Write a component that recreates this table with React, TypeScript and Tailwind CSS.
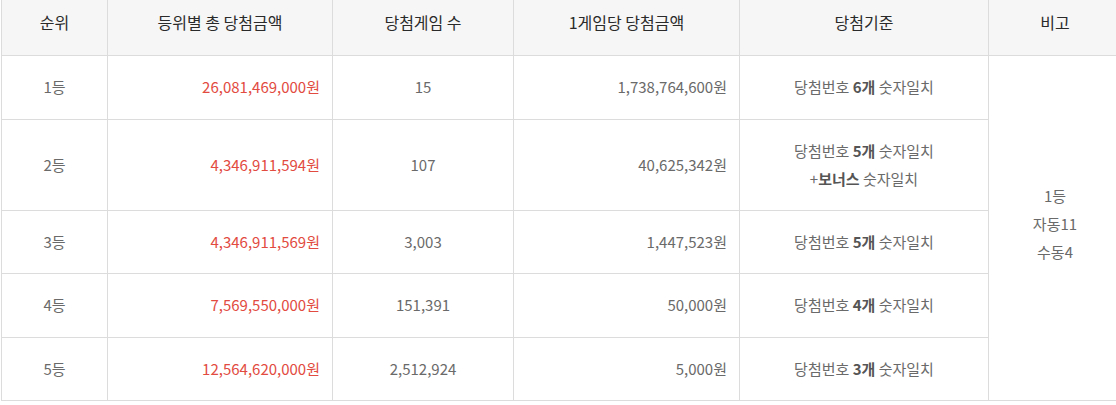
import React from "react";

type Row = {
  rank: string;
  total: string;
  count: string;
  per: string;
  crit: React.ReactNode;
  h: string;
};

const B = ({ children }: { children: React.ReactNode }) => (
  <b className="font-bold text-[#555]">{children}</b>
);

const rows: Row[] = [
  {
    rank: "1등",
    total: "26,081,469,000원",
    count: "15",
    per: "1,738,764,600원",
    crit: (
      <>
        당첨번호 <B>6개</B> 숫자일치
      </>
    ),
    h: "h-[64px]",
  },
  {
    rank: "2등",
    total: "4,346,911,594원",
    count: "107",
    per: "40,625,342원",
    crit: (
      <>
        당첨번호 <B>5개</B> 숫자일치
        <br />+<B>보너스</B> 숫자일치
      </>
    ),
    h: "h-[91px]",
  },
  {
    rank: "3등",
    total: "4,346,911,569원",
    count: "3,003",
    per: "1,447,523원",
    crit: (
      <>
        당첨번호 <B>5개</B> 숫자일치
      </>
    ),
    h: "h-[63px]",
  },
  {
    rank: "4등",
    total: "7,569,550,000원",
    count: "151,391",
    per: "50,000원",
    crit: (
      <>
        당첨번호 <B>4개</B> 숫자일치
      </>
    ),
    h: "h-[64px]",
  },
  {
    rank: "5등",
    total: "12,564,620,000원",
    count: "2,512,924",
    per: "5,000원",
    crit: (
      <>
        당첨번호 <B>3개</B> 숫자일치
      </>
    ),
    h: "h-[63px]",
  },
];

export default function App() {
  const th =
    "border border-[#dcdcdc] border-t-0 bg-[#f6f6f6] text-[16px] leading-[22px] font-normal text-[#2a2a2a] text-center align-middle pt-[11px] pb-[21px]";
  const td =
    "border border-[#dcdcdc] text-[15px] leading-[28px] text-[#6a6a6a] align-middle";
  return (
    <div
      className="w-[1116px] h-[405px] overflow-hidden bg-white"
      style={{ fontFamily: '"Noto Sans CJK KR", "Noto Sans", sans-serif' }}
    >
      <table className="ml-px w-[1120px] table-fixed border-collapse">
        <colgroup>
          <col className="w-[106px]" />
          <col className="w-[225px]" />
          <col className="w-[181px]" />
          <col className="w-[226px]" />
          <col className="w-[249px]" />
          <col className="w-[133px]" />
        </colgroup>
        <thead>
          <tr className="h-[55px]">
            <th className={th}>순위</th>
            <th className={th}>등위별 총 당첨금액</th>
            <th className={th}>당첨게임 수</th>
            <th className={th}>1게임당 당첨금액</th>
            <th className={th}>당첨기준</th>
            <th className={th}>비고</th>
          </tr>
        </thead>
        <tbody>
          {rows.map((r, i) => (
            <tr key={r.rank} className={r.h}>
              <td className={`${td} text-center`}>{r.rank}</td>
              <td className={`${td} text-right pr-[12px] text-[#e24b3f]`}>
                {r.total}
              </td>
              <td className={`${td} text-center`}>{r.count}</td>
              <td className={`${td} text-right pr-[12px]`}>{r.per}</td>
              <td className={`${td} text-center`}>{r.crit}</td>
              {i === 0 && (
                <td rowSpan={5} className={`${td} text-center pb-[8px]`}>
                  1등
                  <br />
                  자동11
                  <br />
                  수동4
                </td>
              )}
            </tr>
          ))}
        </tbody>
      </table>
    </div>
  );
}
